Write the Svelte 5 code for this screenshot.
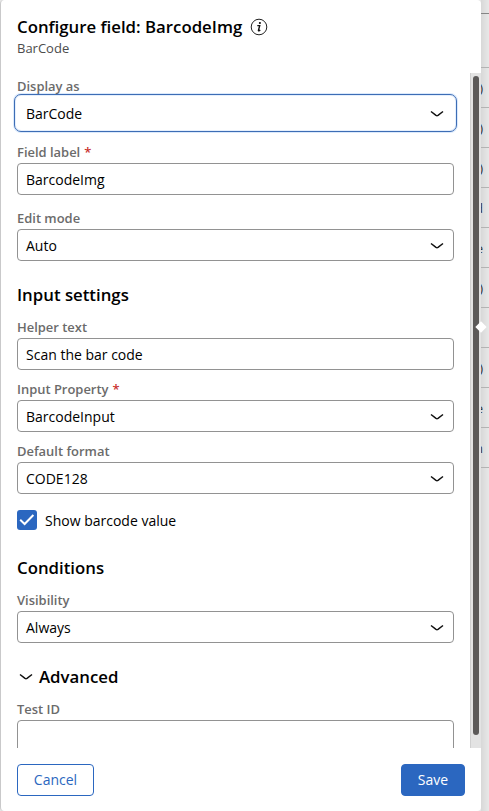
<script>
  const rows = [
    { h: 54, t: '' }, { h: 40, t: ')' }, { h: 40, t: ')' }, { h: 40, t: ')' }, { h: 40, t: 'd' },
    { h: 40, t: 'e' }, { h: 40, t: ')' }, { h: 40, t: '' }, { h: 40, t: ')' }, { h: 40, t: 'e' }, { h: 40, t: 'n' }
  ];
</script>

{#snippet chevron()}
  <svg class="chev" width="14" height="8" viewBox="0 0 14 8"><path d="M1 1.5 L6 5.4 Q7 6 8 5.4 L13 1.5" /></svg>
{/snippet}

{#snippet field(label, value, select = false, required = false, focused = false)}
  <div class="field">
    <div class="label"><span>{label}</span>{#if required}<span class="req">*</span>{/if}</div>
    <div class="box" class:focused>
      <span>{value}</span>
      {#if select}{@render chevron()}{/if}
    </div>
  </div>
{/snippet}

<div class="page">
  <main class="panel">
    <header>
      <div class="title">
        <h1>Configure field: BarcodeImg</h1>
        <svg width="18" height="18" viewBox="0 0 18 18">
          <circle cx="9" cy="9" r="7.8" fill="none" stroke="#222" stroke-width="1" />
          <circle cx="9.9" cy="5" r="1.1" fill="#111" />
          <path d="M7.3 7.6 H9.7 L8.4 12.6 Q8.4 13.2 10.3 12.2" fill="none" stroke="#111" stroke-width="1.4" />
        </svg>
      </div>
      <p>BarCode</p>
    </header>

    <div class="body">
      <div class="form">
        <div class="group wide">
          {@render field('Display as', 'BarCode', true, false, true)}
          {@render field('Field label', 'BarcodeImg', false, true)}
          {@render field('Edit mode', 'Auto', true)}
        </div>
        <h2 class="input-title">Input settings</h2>
        <div class="group">
          {@render field('Helper text', 'Scan the bar code')}
          {@render field('Input Property', 'BarcodeInput', true, true)}
          {@render field('Default format', 'CODE128', true)}
        </div>
        <div class="check">
          <span class="tick"><svg width="20" height="20" viewBox="0 0 20 20"><path d="M3.2 9.8 L7.6 14 L16.4 5" /></svg></span>
          <span class="check-label">Show barcode value</span>
        </div>
        <h2 class="cond-title">Conditions</h2>
        {@render field('Visibility', 'Always', true)}
        <h2 class="adv-title">{@render chevron()}<span>Advanced</span></h2>
        {@render field('Test ID', '')}
      </div>
      <div class="track"><div class="thumb"></div></div>
    </div>

    <footer>
      <button class="cancel">Cancel</button>
      <button class="save">Save</button>
    </footer>
  </main>
  <aside>
    <div class="top"></div>
    {#each rows as r}
      <div class="row" style="height: {r.h}px"><span>{r.t}</span></div>
    {/each}
  </aside>
  <div class="handle"></div>
</div>

<style>
  .page {
    position: relative;
    display: flex;
    width: 489px;
    height: 811px;
    overflow: hidden;
    background: #e6e6e6;
    font-family: 'Open Sans', 'Noto Sans', sans-serif;
    color: #000;
  }
  .page * { box-sizing: border-box; }
  .panel {
    position: relative;
    z-index: 1;
    width: 481px;
    flex: none;
    display: flex;
    flex-direction: column;
    background: #fff;
    border-left: 1px solid #c9c9ca;
    border-radius: 4px;
  }
  header { height: 73px; flex: none; padding: 15px 0 0 16px; }
  .title { display: flex; align-items: center; height: 24px; gap: 8px; }
  h1, h2 { margin: 0; font-weight: 600; white-space: nowrap; }
  h1 { font-size: 16.8px; line-height: 24px; width: 225px; }
  header p { margin: 0; font-size: 13px; line-height: 19px; color: #4c4c4c; }
  .body { display: flex; height: 675px; flex: none; overflow: hidden; }
  .form { width: 469px; flex: none; padding: 4px 16px 0; }
  .group { display: flex; flex-direction: column; gap: 10px; }
  .group.wide { gap: 14px; }
  .label {
    display: flex;
    gap: 4px;
    height: 20px;
    font-size: 12.95px;
    font-weight: 600;
    line-height: 19px;
    color: #6b6b6b;
    white-space: nowrap;
  }
  .req { color: #c9302c; }
  .box {
    display: flex;
    align-items: center;
    justify-content: space-between;
    width: 437px;
    height: 32px;
    padding: 1px 9px 0 8px;
    border: 1px solid #929292;
    border-radius: 4px;
    background: #fff;
    font-size: 14px;
    line-height: 20px;
    white-space: nowrap;
  }
  .box.focused {
    width: 443px;
    height: 38px;
    margin: -3px;
    padding: 1px 12px 0 11px;
    border-color: #3d6db5;
    border-radius: 7px;
    box-shadow: 0 0 0 1px #dbe9fb, inset 0 0 0 1px #e5effc;
  }
  .chev { flex: none; }
  .chev path { fill: none; stroke: #111; stroke-width: 1.5; }
  h2 { font-size: 16.8px; line-height: 24px; }
  .input-title { margin: 22px 0 11px; }
  .check { display: flex; align-items: center; gap: 8px; height: 20px; margin-top: 16px; font-size: 14px; line-height: 20px; }
  .check-label { padding-top: 2px; }
  .tick { display: block; width: 20px; height: 20px; border-radius: 3px; background: #2b67c0; }
  .tick svg { display: block; }
  .tick path { fill: none; stroke: #fff; stroke-width: 2; }
  .cond-title { margin: 26px 0 11px; }
  .adv-title { display: flex; align-items: center; gap: 6px; margin: 22px 0 11px; padding-left: 2px; }
  .track { width: 11px; flex: none; padding: 3px 2px 0; background: #e3e3e3; border-left: 1px solid #d0d0d0; }
  .thumb { width: 6px; height: 659px; border-radius: 3px; background: #5c5a59; }
  footer { display: flex; justify-content: space-between; padding: 16px 16px 0; }
  button { height: 32px; padding: 0; font: 14px/20px 'Open Sans', sans-serif; border: 1px solid #2b67c0; border-radius: 4px; }
  .cancel { width: 77px; background: #fff; color: #2b67c0; }
  .save { width: 64px; background: #2b67c0; color: #fff; font-weight: 500; }
  aside { width: 8px; flex: none; background: linear-gradient(90deg, #d8d8d8, #e8e8e8); }
  .top { height: 14px; border-bottom: 1px solid #858585; }
  .row { display: flex; align-items: center; justify-content: flex-end; width: 8px; border-bottom: 1px solid #b3b3b3; font-size: 13px; }
  .row span { margin-right: 6px; opacity: 0.8; }
  .handle { position: absolute; z-index: 2; left: 477px; top: 323px; width: 8px; height: 8px; background: #fff; transform: rotate(45deg); }
</style>
